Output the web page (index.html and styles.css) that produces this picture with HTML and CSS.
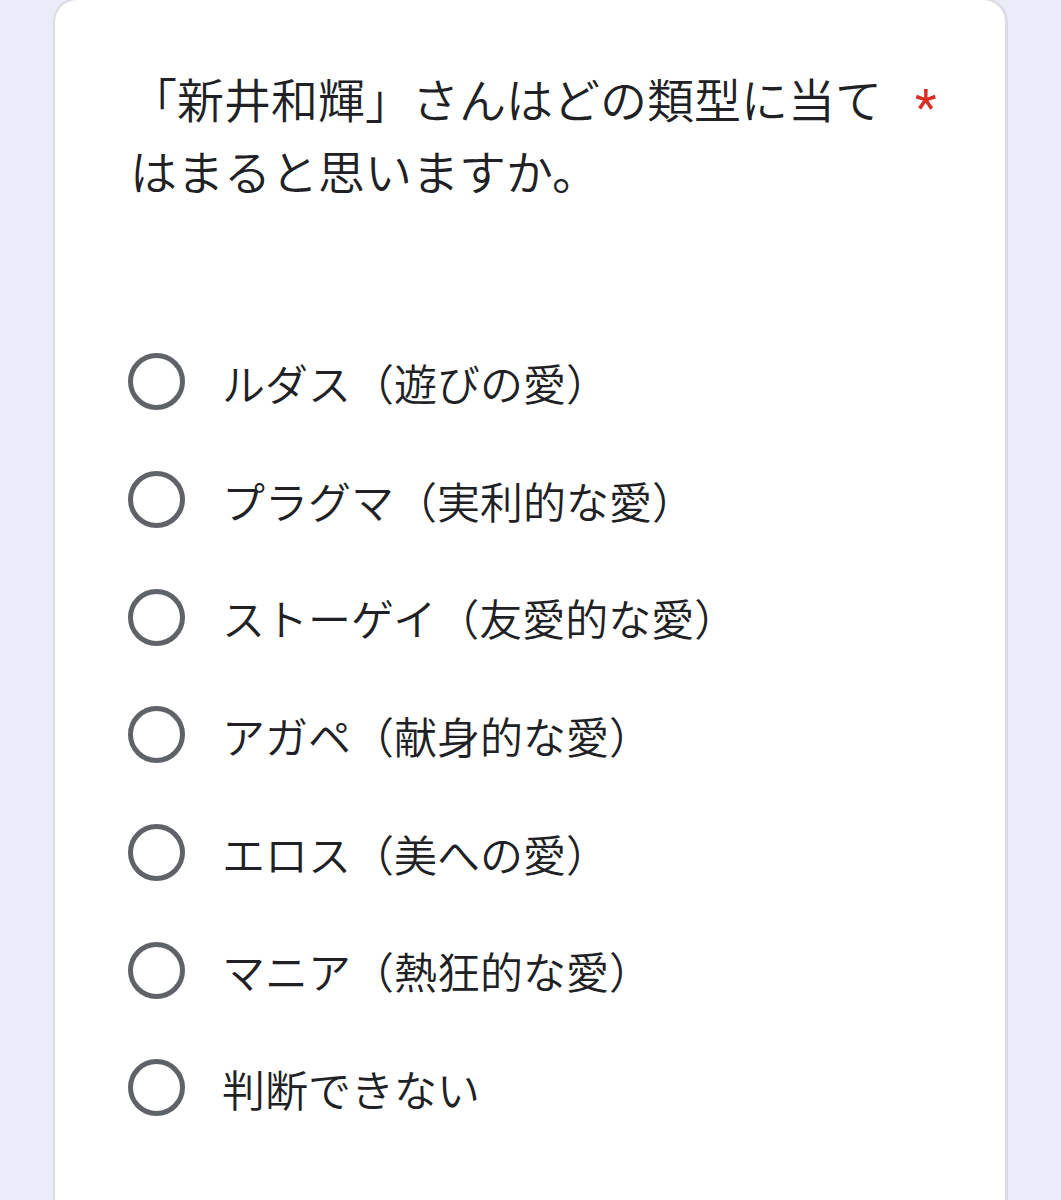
FILE: index.html
```html
<!DOCTYPE html>
<html lang="ja">
<head>
    <meta charset="UTF-8">
    <meta name="viewport" content="width=device-width, initial-scale=1.0">
    <title>質問</title>
    <link rel="stylesheet" href="styles.css">
</head>
<body>
    <!-- 質問カード -->
    <div class="card">
        <div class="title">
            <div class="title-text">「新井和輝」さんはどの類型に当てはまると思いますか。</div>
            <span class="req">*</span>
        </div>

        <!-- 選択肢 -->
        <ul class="options">
            <li><span class="radio"></span><span class="label">ルダス（遊びの愛）</span></li>
            <li><span class="radio"></span><span class="label">プラグマ（実利的な愛）</span></li>
            <li><span class="radio"></span><span class="label">ストーゲイ（友愛的な愛）</span></li>
            <li><span class="radio"></span><span class="label">アガペ（献身的な愛）</span></li>
            <li><span class="radio"></span><span class="label">エロス（美への愛）</span></li>
            <li><span class="radio"></span><span class="label">マニア（熱狂的な愛）</span></li>
            <li><span class="radio"></span><span class="label">判断できない</span></li>
        </ul>
    </div>
</body>
</html>
```

FILE: styles.css
```css
html, body {
    margin: 0;
    padding: 0;
    background-color: #ecebf9;
    height: 1200px;
    overflow: hidden;
}
body {
    font-family: "Noto Sans CJK JP", "Noto Sans", sans-serif;
    font-weight: 350;
    color: #202124;
}
.card {
    margin-left: 53px;
    width: 955px;
    min-height: 1300px;
    margin-top: -2px;
    background-color: #fff;
    border: 2px solid #dadce0;
    border-right-width: 3px;
    border-radius: 24px;
    box-sizing: border-box;
    padding: 62px 0 0 75px;
}
.title {
    display: flex;
    align-items: flex-start;
}
.title-text {
    width: 770px;
    font-size: 47px;
    line-height: 72px;
}
.req {
    color: #d93025;
    font-family: Roboto, "Liberation Sans", sans-serif;
    font-weight: 400;
    font-size: 50px;
    line-height: 72px;
    margin-left: 15px;
    margin-top: 10px;
}
.options {
    list-style-type: none;
    margin: 117px 0 0 0;
    padding: 0;
}
.options li {
    display: flex;
    align-items: center;
    height: 117.7px;
}
.radio {
    width: 57px;
    height: 57px;
    box-sizing: border-box;
    border: 5.5px solid #5f6368;
    border-radius: 50%;
    margin-left: -2px;
    flex-shrink: 0;
}
.label {
    font-size: 43px;
    margin-left: 37px;
}
```
